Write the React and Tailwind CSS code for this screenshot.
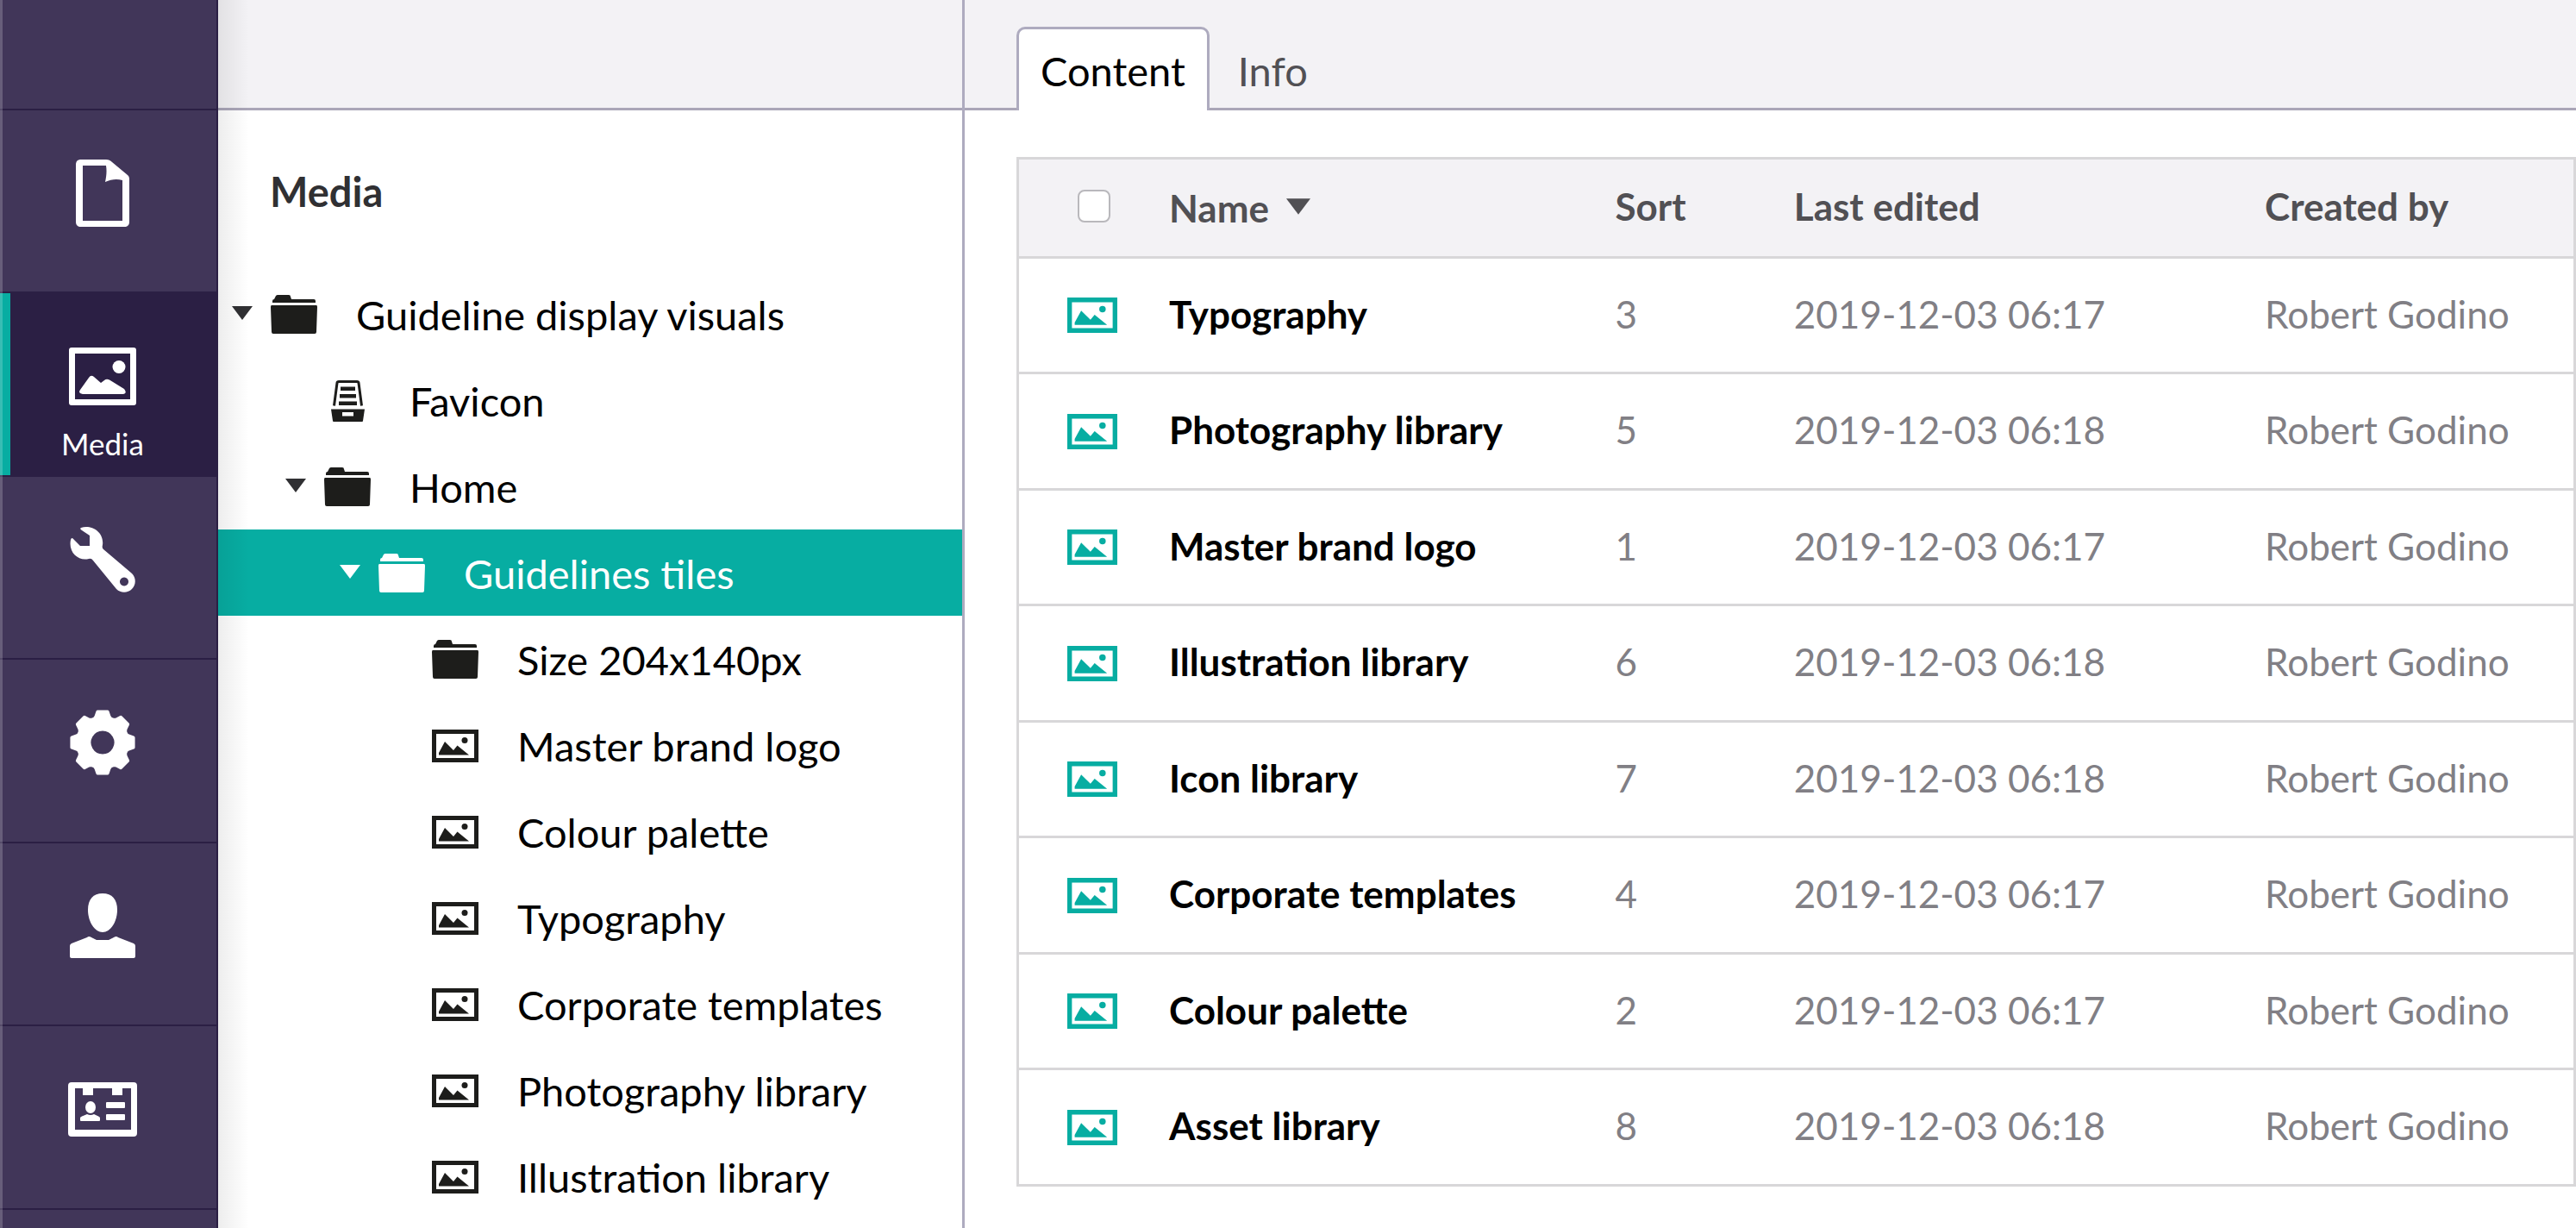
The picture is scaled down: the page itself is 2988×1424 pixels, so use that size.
import { useState } from "react";

function DocumentIcon() {
  return (
    <svg viewBox="0 0 80 80" className="size-20" fill="currentColor" aria-hidden="true">
      <path
        fillRule="evenodd"
        d="M15 1 H44 C47 1 49 2 51 4 L69 19 C71 21 71 22 71 25 V73 C71 77 69 79 65 79 H15 C11 79 9 77 9 73 V7 C9 3 11 1 15 1 Z M17 8 V72 H63 V25 C56 23 50 24 43 27 C44.500 20 45 14 44 8 Z"
      />
    </svg>
  );
}

function MediaIcon() {
  return (
    <svg viewBox="0 0 80 80" className="size-20" fill="currentColor" aria-hidden="true">
      <path fillRule="evenodd" d="M4 7 H76 Q79 7 79 10 V71 Q79 74 76 74 H4 Q1 74 1 71 V10 Q1 7 4 7 Z M8 14 V67 H72 V14 Z" />
      <circle cx="59" cy="29.500" r="7.500" />
      <path d="M14 56 L24 42 Q26.500 38 30 41 L38 48 L42 45 Q44.500 43 48 44.500 L65 55 Q69 60 64 61 H17 Q11 60 14 56 Z" />
    </svg>
  );
}

function WrenchIcon() {
  return (
    <svg viewBox="0 0 80 80" className="size-20" fill="currentColor" aria-hidden="true">
      <path
        fillRule="evenodd"
        d="M15 3 C27 -1 42 8 40 23 Q39 26 41 28 L74 56 C79 61 79 69 74 74 C69 79 61 79 56 74 L29 41 Q27 38 24 39 C12 42 0 32 3 17 Q4 13 7 17 L14 24 H25 V12 L16 6 Q13 4 15 3 Z M65 60.500 a5 5 0 1 0 0.010 0 Z"
      />
    </svg>
  );
}

const gearPoints = Array.from({ length: 8 }, (_, k) =>
  [
    [29, -19],
    [31, -14],
    [36, -9],
    [36, 9],
    [31, 14],
    [29, 19],
  ]
    .map(([r, deg]) => {
      const a = ((k * 45 + deg) * Math.PI) / 180;
      return `${(40 + r * Math.sin(a)).toFixed(2)},${(40 - r * Math.cos(a)).toFixed(2)}`;
    })
    .join(" L")
).join(" L");

function GearIcon() {
  return (
    <svg viewBox="0 0 80 80" className="size-20" fill="currentColor" aria-hidden="true">
      <path
        fillRule="evenodd"
        stroke="currentColor"
        strokeWidth="4"
        strokeLinejoin="round"
        d={`M${gearPoints} Z M40 24.500 a15.500 15.500 0 1 0 0.010 0 Z`}
      />
    </svg>
  );
}

function UserIcon() {
  return (
    <svg viewBox="0 0 80 80" className="size-20" fill="currentColor" aria-hidden="true">
      <path d="M40 2 C51 2 57 9 57 21 C57 35 49 47 40 47 C31 47 23 35 23 21 C23 9 29 2 40 2 Z" />
      <path d="M22 53 Q24 51 27 53 L33 56 H47 L53 53 Q56 51 58 53 L76 60 Q78 61 78 63 V75 Q78 77 76 77 H4 Q2 77 2 75 V63 Q2 61 4 60 Z" />
    </svg>
  );
}

function CardIcon() {
  return (
    <svg viewBox="0 0 80 80" className="size-20" fill="currentColor" aria-hidden="true">
      <path
        fillRule="evenodd"
        d="M4 9 H76 Q80 9 80 13 V68 Q80 72 76 72 H4 Q0 72 0 68 V13 Q0 9 4 9 Z M8 16 V64 H73 V16 H63 V24 H51 V16 H29 V24 H17 V16 Z"
      />
      <ellipse cx="26" cy="38" rx="6" ry="7" />
      <path d="M14 50 Q14 49 22 46 Q26 48 30 46 Q37 49 37 50 V53 Q37 54 36 54 H15 Q14 54 14 53 Z" />
      <rect x="44" y="32" width="22" height="7" rx="1" />
      <rect x="44" y="46" width="22" height="7" rx="1" />
    </svg>
  );
}

function FolderIcon() {
  return (
    <svg viewBox="0 0 54 46" className="h-[46px] w-[54px]" fill="currentColor" aria-hidden="true">
      <path d="M2 9 V7 Q2 5 4 5 L6 1 Q7 0 8 0 H21 Q23 0 23 2 L24 5 H50 Q52 5 52 7 V9 Z" />
      <path d="M1 12 H53 Q54 12 54 14 L53 43 Q53 45 51 45 H3 Q1 45 1 43 L0 14 Q0 12 1 12 Z" />
    </svg>
  );
}

function DrawerIcon() {
  return (
    <svg viewBox="0 0 39 48" className="h-12 w-[39px]" fill="currentColor" aria-hidden="true">
      <path d="M3.500 29.500 L7 3 Q7.200 1.500 9 1.500 H30 Q31.800 1.500 32 3 L35.500 29.500" fill="none" stroke="currentColor" strokeWidth="3" />
      <path d="M11 7.500 H28 V12 H11 Z M10 16 H29 V20.500 H10 Z M9 24.500 H30 V29 H9 Z" />
      <path fillRule="evenodd" d="M0 33.500 H39 L37 47 Q37 48 36 48 H3 Q2 48 2 47 Z M13 37 V41.500 H26 V37 Z" />
    </svg>
  );
}

function PictureIcon({ className }) {
  return (
    <svg viewBox="0 0 54 38" className={className} fill="currentColor" aria-hidden="true">
      <path fillRule="evenodd" d="M0 0 H54 V38 H0 Z M5 5 V33 H49 V5 Z" />
      <circle cx="38" cy="12.500" r="3.500" />
      <path d="M8 29.500 V27 L15 14 L25 24 L29.500 18.500 L43 29.500 Z" />
    </svg>
  );
}

function CaretIcon({ className }) {
  return (
    <svg viewBox="0 0 24 16" className={className} fill="currentColor" aria-hidden="true">
      <path d="M0 0 H24 L12 16 Z" />
    </svg>
  );
}

const sections = [
  { label: "Content", Icon: DocumentIcon },
  { label: "Media", Icon: MediaIcon },
  { label: "Settings", Icon: WrenchIcon },
  { label: "Configuration", Icon: GearIcon },
  { label: "Users", Icon: UserIcon },
  { label: "Members", Icon: CardIcon },
];

const indents = ["pl-4", "pl-[78px]", "pl-[141px]", "pl-[203px]"];

const tree = [
  { label: "Guideline display visuals", level: 0, icon: "folder", open: true },
  { label: "Favicon", level: 1, icon: "drawer" },
  { label: "Home", level: 1, icon: "folder", open: true },
  { label: "Guidelines tiles", level: 2, icon: "folder", open: true, selected: true },
  { label: "Size 204x140px", level: 3, icon: "folder" },
  { label: "Master brand logo", level: 3, icon: "picture" },
  { label: "Colour palette", level: 3, icon: "picture" },
  { label: "Typography", level: 3, icon: "picture" },
  { label: "Corporate templates", level: 3, icon: "picture" },
  { label: "Photography library", level: 3, icon: "picture" },
  { label: "Illustration library", level: 3, icon: "picture" },
];

const rows = [
  ["Typography", 3, "2019-12-03 06:17"],
  ["Photography library", 5, "2019-12-03 06:18"],
  ["Master brand logo", 1, "2019-12-03 06:17"],
  ["Illustration library", 6, "2019-12-03 06:18"],
  ["Icon library", 7, "2019-12-03 06:18"],
  ["Corporate templates", 4, "2019-12-03 06:17"],
  ["Colour palette", 2, "2019-12-03 06:17"],
  ["Asset library", 8, "2019-12-03 06:18"],
];

function SectionNav() {
  return (
    <nav aria-label="Sections" className="relative flex w-[253px] shrink-0 flex-col border-r-2 border-[#2b1f44] bg-[#413659]">
      <div className="h-32 shrink-0 border-b-2 border-[#2b1f44]" />
      {sections.map(({ label, Icon }) => {
        const active = label === "Media";
        return (
          <button
            key={label}
            type="button"
            aria-label={label}
            aria-current={active ? "page" : undefined}
            className={
              "relative flex shrink-0 flex-col items-center border-b-2 border-[#2b1f44] pt-[56px] pr-[13px] text-white odd:h-[213px] even:h-[212px] " +
              (active ? "bg-[#2b1f44]" : "")
            }
          >
            {active && <span className="absolute top-0 bottom-0 left-0 w-3 bg-[#07ada2]" />}
            <Icon />
            {active && <span className="mt-[18px] text-[35px] leading-10">{label}</span>}
          </button>
        );
      })}
      <div className="pointer-events-none absolute inset-y-0 left-0 w-[3px] bg-white/20" />
    </nav>
  );
}

function MediaTree() {
  return (
    <aside className="relative flex w-[866px] shrink-0 flex-col border-r-3 border-[#aeabbf] bg-white">
      <div className="h-32 shrink-0 border-b-3 border-[#aaa6b8] bg-[#f3f2f5]" />
      <h2 className="mt-16 pl-[60px] text-[47px] leading-[60px] font-bold text-[#303033]">Media</h2>
      <ul className="mt-[62px]">
        {tree.map(({ label, level, icon, open, selected }) => (
          <li key={label}>
            <a
              href="#"
              aria-current={selected ? "true" : undefined}
              className={
                "flex h-[100px] items-center pt-0.5 text-[47px] whitespace-nowrap " +
                indents[level] +
                (selected ? " bg-[#07ada2] text-white" : " text-black")
              }
            >
              <span className={"flex w-[45px] " + (selected ? "text-white" : "text-[#303033]")}>
                {open && <CaretIcon className="mb-1 h-4 w-6" />}
              </span>
              <span className={"flex w-[54px] justify-center " + (selected ? "text-white" : "text-[#1d1d1b]")}>
                {icon === "folder" && <FolderIcon />}
                {icon === "drawer" && <DrawerIcon />}
                {icon === "picture" && <PictureIcon className="h-[38px] w-[54px]" />}
              </span>
              <span className="ml-[45px]">{label}</span>
            </a>
          </li>
        ))}
      </ul>
      <div className="pointer-events-none absolute inset-y-0 left-0 w-9 bg-linear-to-r from-black/7 to-transparent" />
    </aside>
  );
}

function MediaTable() {
  return (
    <div className="border-3 border-b-0 border-[#d8d7d9]">
      <table className="w-full table-fixed border-separate border-spacing-0 text-left text-[44px] whitespace-nowrap">
        <colgroup>
          <col className="w-[174px]" />
          <col className="w-[28.7%]" />
          <col className="w-[11.5%]" />
          <col className="w-[30.3%]" />
          <col />
        </colgroup>
        <thead>
          <tr className="h-[115px] bg-[#f3f2f5] text-[#515054] *:border-b-3 *:border-[#d8d7d9] *:pb-1">
            <th>
              <input
                type="checkbox"
                aria-label="Select all"
                className="mx-auto block size-[38px] appearance-none rounded-lg border-2 border-[#b9b8bc] bg-white"
              />
            </th>
            <th>
              <button type="button" className="mt-1 flex items-center gap-5 font-bold">
                Name
                <CaretIcon className="mb-1 h-[19px] w-7" />
              </button>
            </th>
            <th>Sort</th>
            <th>Last edited</th>
            <th>Created by</th>
          </tr>
        </thead>
        <tbody className="text-[#817f85]">
          {rows.map(([name, sort, edited]) => (
            <tr key={name} className="odd:h-[134px] even:h-[135px] *:border-b-3 *:border-[#d8d7d9] *:pb-1">
              <td className="pr-1 text-[#07ada2]">
                <PictureIcon className="mx-auto mt-1 h-[41px] w-[58px]" />
              </td>
              <td>
                <a href="#" className="font-bold text-black">
                  {name}
                </a>
              </td>
              <td>{sort}</td>
              <td>{edited}</td>
              <td>Robert Godino</td>
            </tr>
          ))}
        </tbody>
      </table>
    </div>
  );
}

export default function App() {
  const [tab, setTab] = useState("Content");
  return (
    <div className="flex min-h-screen bg-white font-['Lato',sans-serif]">
      <SectionNav />
      <MediaTree />
      <main className="min-w-0 flex-1">
        <div role="tablist" className="flex h-32 items-end border-b-3 border-[#aaa6b8] bg-[#f3f2f5] pl-[60px] text-[47px]">
          {["Content", "Info"].map((name) => (
            <button
              key={name}
              type="button"
              role="tab"
              aria-selected={tab === name}
              onClick={() => setTab(name)}
              className={
                "-mb-[3px] h-[97px] rounded-t-[10px] border-3 border-b-0 pt-0.5 " +
                (tab === name ? "border-[#aeabbf] bg-white px-[25px] text-black" : "border-transparent px-[30px] text-[#515054]")
              }
            >
              {name}
            </button>
          ))}
        </div>
        <div className="pt-[54px] pl-[60px]">
          <MediaTable />
        </div>
      </main>
    </div>
  );
}
